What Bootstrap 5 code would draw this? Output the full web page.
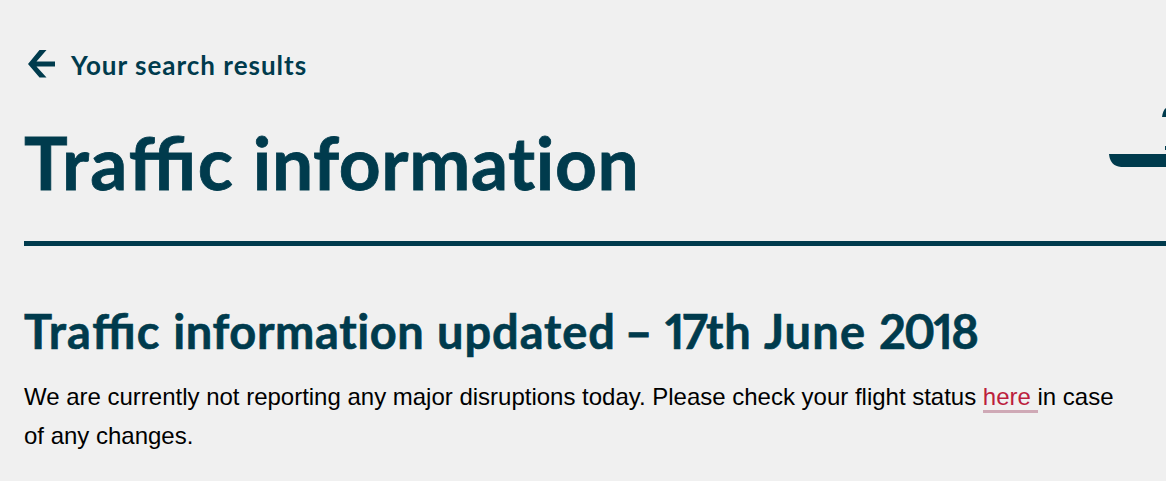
<!DOCTYPE html>
<html lang="en">
<head>
  <meta charset="UTF-8">
  <meta name="viewport" content="width=device-width, initial-scale=1.0">
  <title>Traffic information</title>
  <link href="https://cdn.jsdelivr.net/npm/bootstrap@5.3.0/dist/css/bootstrap.min.css" rel="stylesheet">
  <style>
    body {
      background-color: #f0f0f0;
      color: #000;
      font-family: "Liberation Sans", Arial, sans-serif;
      overflow: hidden;
    }

    .page-wrap {
      padding: 45px 0 0 24px;
    }

    .brand-text {
      color: #003b4d;
      font-family: Lato, sans-serif;
      font-weight: 700;
    }

    /* keep the joined ffi even with letter-spacing */
    .joined {
      font-feature-settings: "liga" 1;
    }

    .back-link {
      height: 40px;
      font-size: 26px;
      line-height: 40px;
      letter-spacing: 1px;
    }

    .back-arrow {
      width: 36px;
      height: 36px;
      margin: -2px 11px 0 0;
    }

    .page-head {
      height: 161px;
      border-bottom: 5px solid #003b4d;
    }

    .page-title {
      margin-top: 32px;
      font-size: 73px;
      line-height: 90px;
      letter-spacing: 0.6px;
      -webkit-text-stroke: 0.8px #003b4d;
    }

    .page-title .word-first {
      letter-spacing: 1.5px;
    }

    .head-art {
      width: 58px;
      height: 70px;
      margin-top: 15px;
    }

    .news-title {
      margin-top: 55px;
      font-size: 47px;
      line-height: 60px;
      letter-spacing: 0.6px;
      word-spacing: 0.6px;
      font-feature-settings: "pnum" 1;
      -webkit-text-stroke: 0.6px #003b4d;
    }

    .news-title .word-first,
    .news-title .word-june {
      letter-spacing: 1.2px;
    }

    .news-title .word-updated {
      letter-spacing: 0.9px;
    }

    .news-title .title-dash {
      margin: 0 -0.5px 0 -3.5px;
      -webkit-text-stroke-width: 1px;
    }

    .news-title .word-day,
    .news-title .word-year {
      letter-spacing: -1.8px;
    }

    .news-text {
      margin-top: 16px;
      width: 1100px;
      font-size: 24px;
      line-height: 39px;
      letter-spacing: -0.008px;
    }

    .status-link {
      color: #bc1e3d;
      border-bottom: 3px solid #cfa9b6;
      white-space: pre;
    }
  </style>
</head>
<body>

  <main class="page-wrap">
    <!-- Back to results -->
    <a href="#" class="back-link brand-text d-flex align-items-center text-decoration-none">
      <svg class="back-arrow" viewBox="0 0 36 36" fill="#003b4d">
        <path d="M15.500 4H22.500L12.500 15.500H31V20.500H12.500L22.500 31.500H15.500L4 18z"/>
      </svg>
      <span>Your search results</span>
    </a>

    <!-- Page heading -->
    <header class="page-head d-flex justify-content-between align-items-start">
      <h1 class="page-title brand-text mb-0 text-nowrap"><span class="word-first">Tra<span class="joined">ffi</span>c</span> information</h1>
      <svg class="head-art" viewBox="0 0 58 70" fill="#003b4d">
        <path d="M1 54H58V67H13Q2 66 1 54z"/>
        <path d="M54 17Q55 10 58 8V17zM57 46h1v4h-1z"/>
      </svg>
    </header>

    <!-- Latest update -->
    <section>
      <h2 class="news-title brand-text mb-0 text-nowrap"><span class="word-first">Tra<span class="joined">ffi</span>c</span> information <span class="word-updated">updated</span> <span class="title-dash">–</span> <span class="word-day">17</span>th <span class="word-june">June</span> <span class="word-year">2018</span></h2>
      <p class="news-text mb-0">We are currently not reporting any major disruptions today. Please check your flight status <a href="#" class="status-link text-decoration-none">here </a>in case of any changes.</p>
    </section>
  </main>

  <script src="https://cdn.jsdelivr.net/npm/bootstrap@5.3.0/dist/js/bootstrap.bundle.min.js"></script>
</body>
</html>
